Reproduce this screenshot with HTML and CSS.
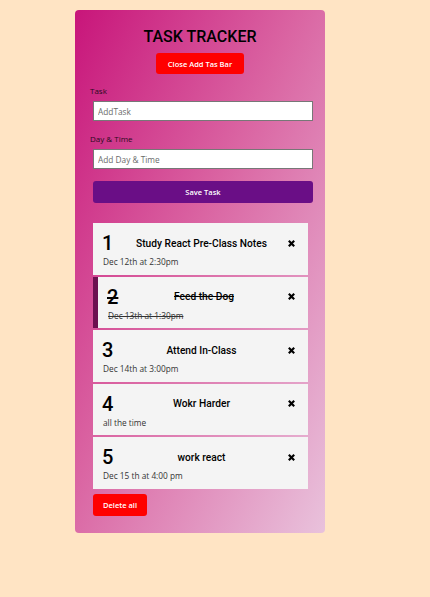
FILE: index.html
```html
<!DOCTYPE html>
<html>
<head>
<meta charset="utf-8">
<link rel="stylesheet" href="styles.css">
</head>
<body>
<div class="container">
  <header class="header">
    <h1 class="title">TASK TRACKER</h1>
    <button class="btn btn-red btn-close">Close Add Tas Bar</button>
  </header>
  <form class="add-form">
    <div class="form-control">
      <label class="label">Task</label>
      <input class="input" type="text" placeholder="AddTask">
    </div>
    <div class="form-control">
      <label class="label">Day &amp; Time</label>
      <input class="input" type="text" placeholder="Add Day &amp; Time">
    </div>
    <button type="button" class="btn btn-save">Save Task</button>
  </form>
  <div class="tasks">
    <div class="task">
      <div class="task-row"><span class="num">1</span><span class="task-title">Study React Pre-Class Notes</span><svg class="x" viewBox="0 0 10 10"><path d="M2 2L8 8M8 2L2 8"/></svg></div>
      <p class="day">Dec 12th at 2:30pm</p>
    </div>
    <div class="task task-done">
      <div class="task-row"><span class="num">2</span><span class="task-title">Feed the Dog</span><svg class="x" viewBox="0 0 10 10"><path d="M2 2L8 8M8 2L2 8"/></svg></div>
      <p class="day">Dec 13th at 1:30pm</p>
    </div>
    <div class="task">
      <div class="task-row"><span class="num">3</span><span class="task-title">Attend In-Class</span><svg class="x" viewBox="0 0 10 10"><path d="M2 2L8 8M8 2L2 8"/></svg></div>
      <p class="day">Dec 14th at 3:00pm</p>
    </div>
    <div class="task">
      <div class="task-row"><span class="num">4</span><span class="task-title">Wokr Harder</span><svg class="x" viewBox="0 0 10 10"><path d="M2 2L8 8M8 2L2 8"/></svg></div>
      <p class="day">all the time</p>
    </div>
    <div class="task">
      <div class="task-row"><span class="num">5</span><span class="task-title">work react</span><svg class="x" viewBox="0 0 10 10"><path d="M2 2L8 8M8 2L2 8"/></svg></div>
      <p class="day">Dec 15 th at 4:00 pm</p>
    </div>
  </div>
  <button class="btn btn-red btn-delete">Delete all</button>
</div>
</body>
</html>
```

FILE: styles.css
```css
* { box-sizing: border-box; }
html, body {
  margin: 0;
  padding: 0;
  background: #ffe4c4;
  font-family: "Open Sans", "Noto Sans", sans-serif;
}
.container {
  width: 250px;
  margin: 10px 0 0 75px;
  padding: 0 15px 17px 15px;
  border-radius: 4px;
  background: linear-gradient(to bottom right, #c8157a 0%, #da64a2 45%, #e9c2dc 100%);
}
.header {
  display: flex;
  flex-direction: column;
  align-items: center;
  padding-top: 16px;
}
.title {
  margin: 0;
  font-family: Roboto, "Open Sans", sans-serif;
  font-size: 16px;
  font-weight: 500;
  line-height: 22px;
  color: #000;
}
.btn {
  border: none;
  border-radius: 3px;
  color: #fff;
  font-family: inherit;
  font-size: 7.5px;
  font-weight: 600;
  cursor: pointer;
}
.btn-red { background: #ff0000; }
.btn-close {
  margin-top: 5px;
  width: 88px;
  height: 21px;
  padding: 0;
}
.add-form {
  margin-top: 11px;
}
.form-control {
  display: flex;
  flex-direction: column;
  margin-bottom: 12px;
}
.label {
  font-size: 8px;
  line-height: 12px;
  color: #2a0a1c;
  margin-bottom: 4px;
}
.input {
  margin-left: 3px;
  width: 220px;
  height: 20px;
  border: 1px solid #777;
  border-radius: 0;
  padding: 0 4px;
  font-family: inherit;
  font-size: 8.3px;
  background: #fff;
}
.input::placeholder { color: #6a6a6a; }
.btn-save {
  margin: 12px 0 0 3px;
  width: 220px;
  height: 22px;
  background: #6a0e86;
  display: block;
}
.tasks {
  margin: 20px 0 0 3px;
  display: flex;
  flex-direction: column;
  gap: 2px;
}
.task {
  width: 215px;
  height: 51.5px;
  background: #f4f4f4;
  padding: 9px 12px 0 9px;
  display: flex;
  flex-direction: column;
}
.task-done {
  border-left: 5px solid #6c1150;
  padding-left: 9px;
}
.task-row {
  display: flex;
  align-items: center;
  justify-content: space-between;
  height: 22px;
}
.num {
  font-family: Roboto, "Open Sans", sans-serif;
  font-size: 20px;
  font-weight: 500;
  line-height: 22px;
  color: #000;
  width: 14px;
}
.task-title {
  flex: 1;
  text-align: center;
  font-family: Roboto, "Open Sans", sans-serif;
  font-size: 10.2px;
  font-weight: 500;
  color: #000;
}
.x {
  width: 9px;
  height: 9px;
  stroke: #000;
  stroke-width: 2.4;
  fill: none;
}
.day {
  margin: 3px 0 0 1px;
  font-size: 8.3px;
  line-height: 10px;
  color: #333;
}
.task-done .task-title,
.task-done .day,
.task-done .num {
  text-decoration: line-through;
}
.btn-delete {
  margin: 5px 0 0 3px;
  width: 54px;
  height: 22px;
  padding: 0;
  display: block;
}
```
